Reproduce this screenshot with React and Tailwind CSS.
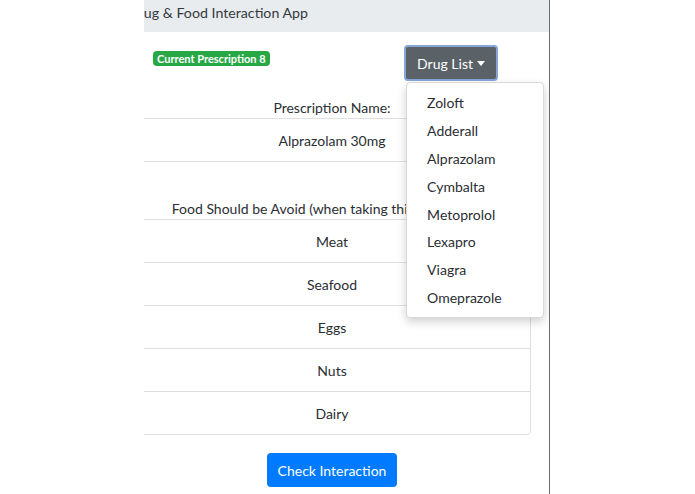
import { useState } from 'react';

const drugs = ['Zoloft', 'Adderall', 'Alprazolam', 'Cymbalta', 'Metoprolol', 'Lexapro', 'Viagra', 'Omeprazole'];
const foods = ['Meat', 'Seafood', 'Eggs', 'Nuts', 'Dairy'];

export default function App() {
  const [open, setOpen] = useState(true);
  const [drug, setDrug] = useState('Alprazolam');

  return (
    <div className="w-[695px] h-[494px] bg-white flex overflow-hidden text-[14px] leading-[21px] text-[#2a2e33]" style={{ fontFamily: 'Lato, "Open Sans", sans-serif' }}>
      <div className="w-[144px] shrink-0" />
      <div className="w-[406px] shrink-0 h-full border-r border-[#6b6b6b] flex flex-col overflow-hidden">
        <div className="h-[32px] bg-[#e9ecef] pt-[2px] whitespace-nowrap text-[14.2px] text-[#343a40]">
          <span className="-ml-[16px] inline-block">Drug &amp; Food Interaction App</span>
        </div>

        <div className="-ml-[11px] w-[398px] flex flex-col">
          <div className="flex justify-between items-start pl-[20px] pr-[33px] mt-[13px]">
            <span className="mt-[6px] bg-[#28a745] text-white font-bold text-[11px] leading-[11px] px-[4px] py-[2px] rounded-[4px]">
              Current Prescription 8
            </span>
            <div className="relative">
              <button
                onClick={() => setOpen(!open)}
                className="h-[36px] px-[11px] flex items-center bg-[#5a6268] text-white rounded-[4px] border-[2px] border-[#86a6d8]"
              >
                Drug List
                <span className="ml-[4px] w-0 h-0 border-x-[4px] border-t-[5px] border-x-transparent border-t-white" />
              </button>
              {open && (
                <div className="absolute left-[2px] top-full mt-[1px] w-[138px] bg-white border border-[#d9d9d9] rounded-[4px] shadow-[0_4px_10px_rgba(0,0,0,0.18)] py-[6px] z-10">
                  {drugs.map((d) => (
                    <div
                      key={d}
                      onClick={() => { setDrug(d); setOpen(false); }}
                      className="pl-[20px] py-[3.4px] leading-[21px] cursor-pointer hover:bg-[#f8f9fa]"
                    >
                      {d}
                    </div>
                  ))}
                </div>
              )}
            </div>
          </div>

          <div className="text-center mt-[16px]">Prescription Name:</div>
          <div className="border border-[#dfdfdf] rounded-[4px] text-center py-[10.5px]">{drug} 30mg</div>

          <div className="text-center mt-[36px] whitespace-nowrap">Food Should be Avoid (when taking this medication):</div>
          <div className="border border-[#dfdfdf] rounded-[4px] flex flex-col">
            {foods.map((f, i) => (
              <div key={f} className={`text-center py-[10.5px] ${i > 0 ? 'border-t border-[#dfdfdf]' : ''}`}>{f}</div>
            ))}
          </div>

          <div className="flex justify-center mt-[18px]">
            <button className="h-[34px] px-[11px] bg-[#007bff] text-white rounded-[4px]">Check Interaction</button>
          </div>
        </div>
      </div>
    </div>
  );
}
